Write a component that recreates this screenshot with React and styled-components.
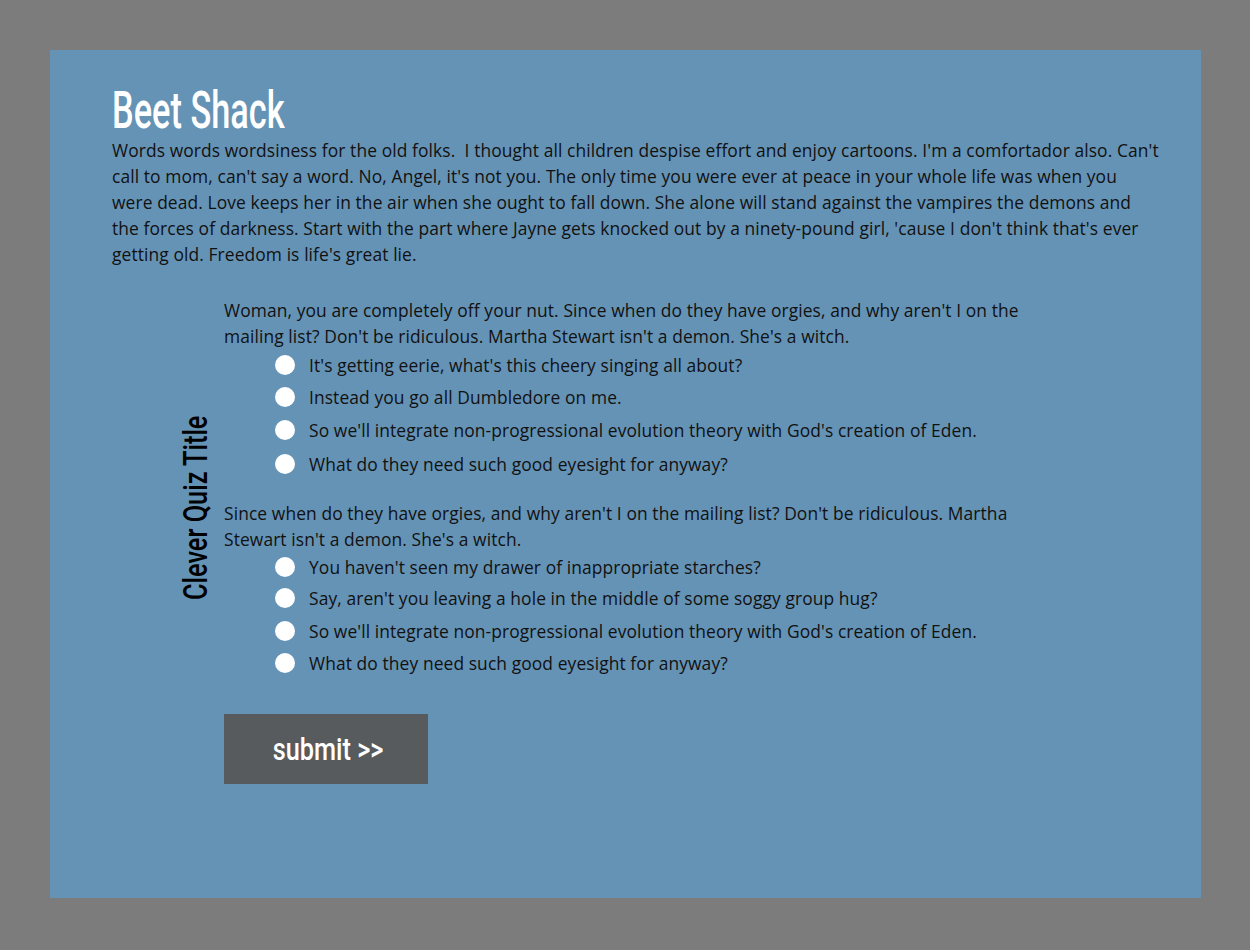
import React from "react";
import styled, { createGlobalStyle } from "styled-components";

const Global = createGlobalStyle`
  html, body { margin: 0; padding: 0; background: #7b7c7b; }
  * { box-sizing: border-box; }
`;

const Page = styled.div`
  padding: 50px 49px 52px 50px;
  background: #7b7c7b;
  min-height: 950px;
`;

const Panel = styled.main`
  background: #6593b6;
  min-height: 848px;
  padding: 32px 40px 40px 62px;
  font-family: "Open Sans", Lato, sans-serif;
  color: #111;
`;

const Condensed = styled.span`
  display: inline-block;
  font-family: Roboto, "Liberation Sans", sans-serif;
  font-weight: 500;
  transform: scaleX(${(p) => p.$sx || 0.66});
  transform-origin: ${(p) => p.$origin || "left center"};
  white-space: nowrap;
`;

const Title = styled.h1`
  margin: 0;
  font-size: 52px;
  line-height: 52px;
  font-weight: 500;
  color: #fff;
`;

const Body = `
  margin: 0;
  font-size: 17.4px;
  letter-spacing: 0.1px;
  line-height: 26px;
`;

const Intro = styled.p`
  ${Body}
`;

const Quiz = styled.section`
  display: flex;
  margin-top: 30px;
`;

const Side = styled.div`
  width: 112px;
  display: flex;
  justify-content: flex-end;
  align-items: flex-start;
  padding-right: 14px;
  padding-top: 87px;
`;

const SideTitle = styled.h2`
  margin: 0;
  writing-mode: vertical-rl;
  transform: rotate(180deg) scaleY(0.745);
  font-family: Roboto, "Liberation Sans", sans-serif;
  font-weight: 500;
  font-size: 34px;
  line-height: 30px;
  color: #000;
  white-space: nowrap;
`;

const Main = styled.div`
  width: 812px;
`;

const Question = styled.fieldset`
  border: 0;
  margin: 0 0 18px;
  padding: 0;
`;

const QText = styled.p`
  ${Body}
`;

const Options = styled.ul`
  list-style: none;
  margin: 0;
  padding: 0 0 0 51px;
`;

const Option = styled.li`
  display: flex;
  align-items: center;
  height: ${(p) => p.$h || 32}px;
  gap: 14px;
  font-size: 17.4px;
  letter-spacing: 0.1px;
  padding-left: ${(p) => p.$shift || 0}px;
`;

const Radio = styled.span`
  width: 20px;
  height: 20px;
  border-radius: 50%;
  background: #fff;
  flex: none;
`;

const Submit = styled.button`
  margin-top: 36px;
  width: 204px;
  height: 70px;
  border: 0;
  background: #585b5e;
  color: #fff;
  font-size: 32px;
  padding: 0 0 0 4px;
  cursor: pointer;
  display: flex;
  align-items: center;
  justify-content: center;
`;

const questions = [
  {
    text: "Woman, you are completely off your nut. Since when do they have orgies, and why aren't I on the mailing list? Don't be ridiculous. Martha Stewart isn't a demon. She's a witch.",
    options: [
      ["It's getting eerie, what's this cheery singing all about?", 0, 32],
      ["Instead you go all Dumbledore on me.", 0, 32],
      ["So we'll integrate non-progressional evolution theory with God's creation of Eden.", -2, 33],
      ["What do they need such good eyesight for anyway?", -3, 36],
    ],
  },
  {
    text: "Since when do they have orgies, and why aren't I on the mailing list? Don't be ridiculous. Martha Stewart isn't a demon. She's a witch.",
    options: [
      ["You haven't seen my drawer of inappropriate starches?", 0, 29],
      ["Say, aren't you leaving a hole in the middle of some soggy group hug?", 0, 33],
      ["So we'll integrate non-progressional evolution theory with God's creation of Eden.", -2, 33],
      ["What do they need such good eyesight for anyway?", -3, 31],
    ],
  },
];

export default function App() {
  return (
    <>
      <Global />
      <Page>
        <Panel>
          <Title>
            <Condensed $sx={0.66}>Beet Shack</Condensed>
          </Title>
          <Intro>
            Words words wordsiness for the old folks.&nbsp; I thought all children despise effort and enjoy cartoons. I'm a comfortador also. Can't call to mom, can't say a word. No, Angel, it's not you. The only time you were ever at peace in your whole life was when you were dead. Love keeps her in the air when she ought to fall down. She alone will stand against the vampires the demons and the forces of darkness. Start with the part where Jayne gets knocked out by a ninety-pound girl, 'cause I don't think that's ever getting old. Freedom is life's great lie.
          </Intro>
          <Quiz>
            <Side>
              <SideTitle>Clever Quiz Title</SideTitle>
            </Side>
            <Main>
              {questions.map((q, i) => (
                <Question key={i}>
                  <QText>{q.text}</QText>
                  <Options>
                    {q.options.map(([label, shift, h], j) => (
                      <Option key={j} $shift={shift} $h={h}>
                        <Radio />
                        <span>{label}</span>
                      </Option>
                    ))}
                  </Options>
                </Question>
              ))}
              <Submit type="button">
                <Condensed $sx={0.79} $origin="center">submit &gt;&gt;</Condensed>
              </Submit>
            </Main>
          </Quiz>
        </Panel>
      </Page>
    </>
  );
}
